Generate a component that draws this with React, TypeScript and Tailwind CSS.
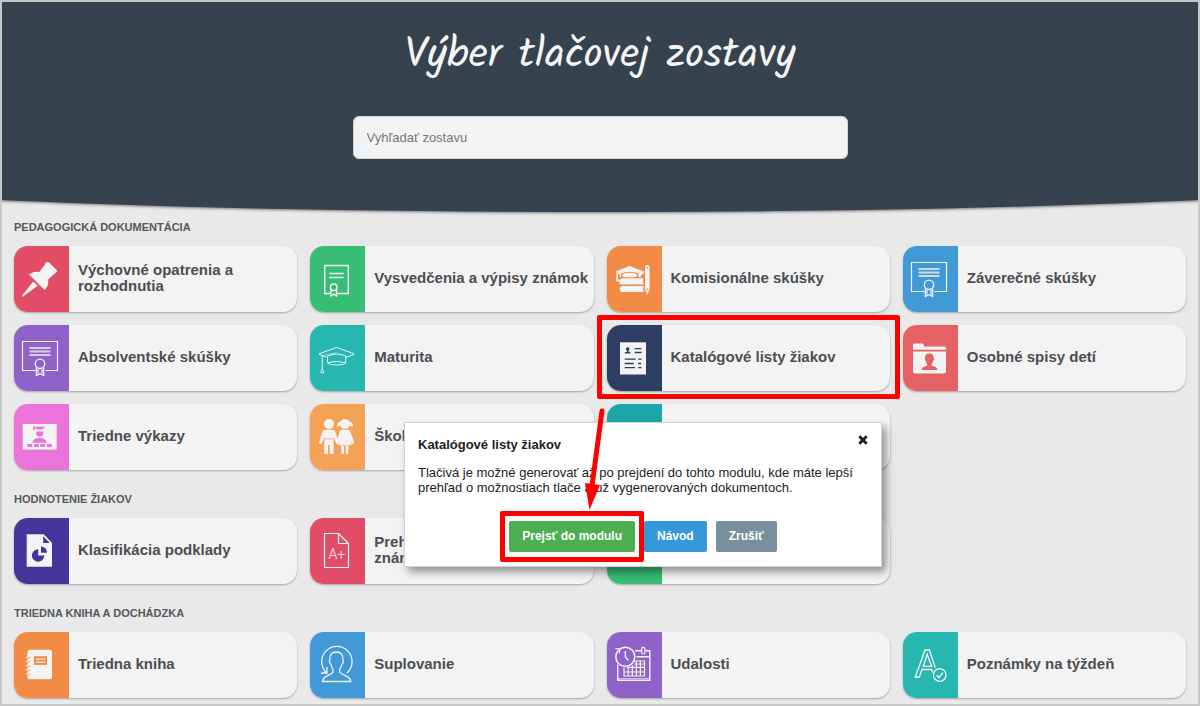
import type { ReactNode } from "react";

const ICON_INK = "#f3f3f3";

type Card = {
  label: string;
  tone: string;
  icon: ReactNode;
  highlighted?: boolean;
};

type Section = { title: string; cards: Card[] };

function Glyph({ children }: { children: ReactNode }) {
  return (
    <svg
      viewBox="0 0 55 66"
      width="55"
      height="66"
      fill="none"
      stroke={ICON_INK}
      strokeWidth="1.1"
      aria-hidden="true"
      className="block"
    >
      {children}
    </svg>
  );
}

const pin = (
  <Glyph>
    <g fill={ICON_INK} stroke="none">
      <path d="M31.800 16.600 Q33.500 15.300 35 16.500 L42.600 24 Q43.600 25.400 42.300 26.600 L39.500 28.600 L34.200 33.400 Q35.300 39 30.600 44 L15 28.500 Q19.500 24.800 25.300 26 L30.300 19.600 Z" />
      <path d="M19.200 35.600 L23.800 39.800 L9 50.600 Q7.800 51 8 49.800 Z" />
    </g>
  </Glyph>
);

const diploma = (
  <Glyph>
    <path d="M21.500 45.500 H8.500 V16.500 H43.500 V45.500 H31.500" strokeWidth="1.200" />
    <path d="M15.500 23 H36.500 M15.500 26.500 H36.500 M15.500 30 H36.500" strokeWidth="1.800" opacity="0.750" />
    <circle cx="26" cy="38.800" r="4.700" strokeWidth="1.400" />
    <path d="M22.300 42.500 V50.600 L26 48.600 L29.700 50.600 V42.500 M24 44 V48.500 M28 44 V48.500" strokeWidth="1.200" />
  </Glyph>
);

const certificate = (
  <Glyph>
    <path d="M20 47.500 H14.700 V19.500 H38.300 V47.500 H27.500" strokeWidth="1.400" />
    <path d="M19.300 27.500 H33.700 M19.300 31.500 H33.700" strokeWidth="1.400" />
    <circle cx="23.700" cy="41.300" r="3.300" strokeWidth="1.500" />
    <path d="M21 43.500 V50 L23.700 48.200 L26.500 50 V43.500" strokeWidth="1.400" />
  </Glyph>
);

const books = (
  <Glyph>
    <g fill={ICON_INK} stroke="none">
      <path d="M22.500 20 L37 25.400 V27.500 L34 29 V31 H31.500 V27.500 Q23 24 14 27.500 V31 H12.800 V28.500 L11 27.800 V31.500 L12 36 L9 35 L9.700 27 L8.600 25.500 Z" />
      <path d="M15.300 28.200 Q22.800 25.400 30 28.200 V30 Q29 31.200 27 31.200 H18 Q16 31.200 15.300 30 Z" />
      <path d="M14.500 32.300 H36.200 V33.500 Q35.200 35.300 36.500 37.300 V38.600 H14.500 Q12 38 12 35.500 Q12 33 14.500 32.300 Z" />
      <path d="M15 40 H36.700 V41.300 Q35.600 43 36.700 45 V46 H15 Q12.600 45.400 12.600 43 Q12.600 40.700 15 40 Z" />
    </g>
    <path d="M38.600 21.200 Q38.600 19.500 40.300 19.500 Q42 19.500 42 21.200 V43.500 L40.300 47.500 L38.600 43.500 Z" fill={ICON_INK} />
    <path d="M40.300 21 V22.500 M40.300 42.500 V44" stroke="#f18b45" strokeWidth="1.500" />
  </Glyph>
);

const sheet = (
  <Glyph>
    <rect x="13" y="17.300" width="26" height="32.200" fill={ICON_INK} stroke="none" />
    <g stroke="#2e3e63" strokeWidth="1.300">
      <path d="M27.700 23.700 H34.500 M27.700 27.500 H34.500 M17.700 34.200 H28.700 M31.200 34.200 H34.500 M17.700 38.500 H26.700 M31 38.500 H34 M17.700 42.700 H28 M31.200 42.700 H34.500" />
    </g>
    <path d="M19 23.500 Q19 22.200 20.700 22.200 Q22.500 22.200 22.400 23.800 Q22.300 25.500 21.500 26 V26.700 L23.700 27.500 V28.600 H17.700 V27.500 L20 26.700 V26 Q19.200 25.500 19 23.500 Z" fill="#2e3e63" stroke="none" />
  </Glyph>
);

const folder = (
  <Glyph>
    <path d="M10 24.800 V20 Q10 18.600 11.500 18.600 H19 Q20.300 18.600 20.800 20 L21.200 21.400 H41.500 Q43 21.400 43 23 V24.800 Z" fill={ICON_INK} stroke="none" />
    <path d="M10 26.500 H43 V46.600 Q43 48.400 41.300 48.400 H11.700 Q10 48.400 10 46.600 Z" fill={ICON_INK} stroke="none" />
    <path d="M26.400 28.500 C29.500 28.500 31 30.500 30.700 33.200 C31.400 33.700 30.700 35.700 30 36 C29.700 37.600 29 38.400 28.600 38.900 V40.300 C30 41.700 34.400 41.500 34.400 45 H18.600 C18.600 41.500 23 41.700 24.300 40.300 V38.900 C23.700 38.400 23 37.600 22.800 36 C22 35.700 21.400 33.700 22 33.200 C21.700 30.500 23.200 28.500 26.400 28.500 Z" fill="#e66163" stroke="none" />
  </Glyph>
);

const mortarboard = (
  <Glyph>
    <g strokeWidth="1" strokeLinejoin="round">
      <path d="M17.300 32.500 L9.300 29.500 V28.700 L26.700 22.500 L43.700 28.700 V29.500 L35.700 32.500" />
      <path d="M12.200 30.500 L26.700 27.500" opacity="0.500" />
      <path d="M17.500 31 Q26.500 27 35.700 31 V37.500 Q34.500 40 26.600 40 Q18.500 40 17.500 37.500 Z" />
      <path d="M17.500 37.800 Q26.500 35 35.700 37.800" />
      <path d="M12.200 30.500 V44" />
      <path d="M12.200 44 Q10.600 45.400 11 47.800 H13.400 Q13.800 45.400 12.200 44 Z" />
    </g>
  </Glyph>
);

const classroom = (
  <Glyph>
    <rect x="8.700" y="20" width="34" height="25.600" fill={ICON_INK} stroke="none" />
    <g fill="#ea74da" stroke="none">
      <path d="M19 22.700 H30.700 V24.300 H28.500 V25.500 H22.500 V24.300 H20.700 L20.300 26 H19 Z" />
      <path d="M22.200 27.500 H29.300 V29.500 Q28.700 32.700 25.700 32.700 Q22.800 32.700 22.200 29.500 Z" />
      <path d="M18.300 38.700 Q19.500 34 25.600 33.800 Q31.600 34 32.800 38.700 Z" />
      <path d="M13.300 40 H18.300 V43 H13.300 Z M20 40 H24.800 V43 H20 Z M26.300 40 H31.200 V43 H26.300 Z M32.800 40 H37.800 V43 H32.800 Z" />
    </g>
  </Glyph>
);

const children = (
  <Glyph>
    <g fill={ICON_INK} stroke="none">
      <circle cx="19" cy="20" r="5" />
      <path d="M15 25.700 H23 Q24.700 25.700 25.300 27.500 L29 39 L26.800 40.600 L23.600 33.500 V34.500 H14.300 V33.500 L11.300 40.600 L9 39.300 L12.400 27.500 Q13 25.700 15 25.700 Z" />
      <path d="M14.300 35.300 H23.600 V50 H19.700 V41 H18 V50 H14.200 Z" />
      <circle cx="35" cy="20" r="5" />
      <path d="M30.700 17 Q27 18.500 27 22.300 Q29.600 23.500 31.300 20 Z M39.300 17 Q43 18.500 43 22.300 Q40.500 23.500 38.700 20 Z" />
      <path d="M32 25.700 H38 Q39.500 25.700 40.200 27.500 L44.300 38.500 L42.300 40.500 L38.800 33.500 L41.800 40.700 Q35 42.400 28 40.700 L31.200 33.500 L28.500 39 L26.300 38.300 L29.800 27.500 Q30.500 25.700 32 25.700 Z" />
      <path d="M31 42 H34 V50 H31.500 Z M35.700 42 H38.700 L38.200 50 H35.700 Z" />
    </g>
  </Glyph>
);

const pieReport = (
  <Glyph>
    <path d="M12.700 16.300 H29.800 L38 25 V48.800 H12.700 Z" fill={ICON_INK} stroke="none" />
    <g fill="#46349a" stroke="none">
      <path d="M29.200 18.300 L35.800 25 H29.200 Z" />
      <path d="M24.200 31.300 A6.200 6.200 0 1 0 30.300 37.600 H24.200 Z" />
      <path d="M27 28.400 A6 6.200 0 0 1 33 34.700 H27 Z" />
    </g>
  </Glyph>
);

const grades = (
  <Glyph>
    <path d="M14.500 15.500 H28.500 L38.500 25.500 V49.500 H14.500 Z M28.500 15.500 V25.500 H38.500" strokeWidth="1.200" />
    <text x="18.500" y="41" fill={ICON_INK} stroke="none" fontFamily="Roboto, Lato, sans-serif" fontSize="14" fontWeight="300">
      A+
    </text>
  </Glyph>
);

const stand = (
  <Glyph>
    <path d="M15 19 H39 V40 H15 Z M25 40 V48.500 M29 40 V48.500" strokeWidth="1.200" />
  </Glyph>
);

const notebook = (
  <Glyph>
    <rect x="13.500" y="17.700" width="24.500" height="29.600" rx="2" fill={ICON_INK} stroke="none" />
    <path d="M12 25.500 L16.500 24 M12 29.700 L16.500 28.200 M12 34 L16.500 32.500 M12 38.200 L16.500 36.700 M12 42.500 L16.500 41" strokeWidth="1.200" />
    <path d="M12.500 26.700 L16.500 25.300 M12.500 31 L16.500 29.500 M12.500 35.200 L16.500 33.700 M12.500 39.500 L16.500 38 M12.500 43.700 L16.500 42.200" stroke="#f18b45" strokeWidth="0.800" />
    <rect x="20" y="24.200" width="13" height="8.700" fill="#f18b45" stroke="none" />
    <path d="M22 27.200 H31.300 M22 30.200 H31.300" strokeWidth="1.200" />
  </Glyph>
);

const substitute = (
  <Glyph>
    <path d="M16.800 41 A15.200 15.200 0 1 1 37 41" strokeWidth="1.300" />
    <path d="M11 41 H17 V35" strokeWidth="1.300" />
    <path
      d="M26.300 20 C31 20 33.500 23 32.800 27.500 C34 28.300 33 32 31.700 32.500 C31.300 35 30.500 36.300 29.700 37 V40 C32 44 40.700 43.500 40.700 49.500 H12.500 C12.500 43.500 21 44 23 40 V37 C22.200 36.300 21.400 35 21 32.500 C19.700 32 18.800 28.300 20 27.500 C19.300 23 21.800 20 26.300 20 Z"
      strokeWidth="1.300"
    />
  </Glyph>
);

const events = (
  <Glyph>
    <path d="M28 18.700 H34 M38.500 18.700 H42.800 V48.300 H10.700 V32.500 M29.500 24.700 H42.800" strokeWidth="1.400" />
    <rect x="34.700" y="15.300" width="3.200" height="6.700" rx="1.500" strokeWidth="1.200" />
    <circle cx="18.300" cy="24.700" r="9.500" strokeWidth="1.500" />
    <path d="M18.300 19 V25 L21.500 28.200" strokeWidth="1.300" />
    <path d="M8.300 16.500 L12.800 17 L12.300 21.500" strokeWidth="1.200" />
    <path d="M27 29 H37.500 V44 H17 V35.500 M17 40 H37.500 M20 35.300 H37.500 M21.200 35.300 V44 M25.300 33 V44 M29.400 29 V44 M33.400 29 V44 M27 32 H37.500" strokeWidth="1.200" />
    <path d="M11 46.500 H42.500" strokeWidth="1" opacity="0.600" />
  </Glyph>
);

const notes = (
  <Glyph>
    <path d="M29.500 40.500 L28.700 37.500 H19 L16.300 45 H12.300 L22 18 H26.500 L32.300 36" strokeWidth="1.300" />
    <path d="M24.200 22.300 L20.300 34.300 H28.700 Z" strokeWidth="1.300" />
    <circle cx="36.700" cy="43" r="6.300" strokeWidth="1.300" />
    <path d="M33.700 43.300 L35.800 45.600 L39.800 40.700" strokeWidth="1.400" />
  </Glyph>
);

const SECTIONS: Section[] = [
  {
    title: "Pedagogická dokumentácia",
    cards: [
      { label: "Výchovné opatrenia a rozhodnutia", tone: "bg-[#e34c67]", icon: pin },
      { label: "Vysvedčenia a výpisy známok", tone: "bg-[#37bd74]", icon: certificate },
      { label: "Komisionálne skúšky", tone: "bg-[#f18b45]", icon: books },
      { label: "Záverečné skúšky", tone: "bg-[#419ad6]", icon: diploma },
      { label: "Absolventské skúšky", tone: "bg-[#8f62ca]", icon: diploma },
      { label: "Maturita", tone: "bg-[#27b7b1]", icon: mortarboard },
      { label: "Katalógové listy žiakov", tone: "bg-[#2e3e63]", icon: sheet, highlighted: true },
      { label: "Osobné spisy detí", tone: "bg-[#e66163]", icon: folder },
      { label: "Triedne výkazy", tone: "bg-[#ea74da]", icon: classroom },
      { label: "Škola", tone: "bg-[#f4a255]", icon: children },
      { label: "", tone: "bg-[#1ca6a8]", icon: null },
    ],
  },
  {
    title: "Hodnotenie žiakov",
    cards: [
      { label: "Klasifikácia podklady", tone: "bg-[#46349a]", icon: pieReport },
      { label: "Prehľad\nznámok", tone: "bg-[#e34c67]", icon: grades },
      { label: "", tone: "bg-[#37bd74]", icon: stand },
    ],
  },
  {
    title: "Triedna kniha a dochádzka",
    cards: [
      { label: "Triedna kniha", tone: "bg-[#f18b45]", icon: notebook },
      { label: "Suplovanie", tone: "bg-[#419ad6]", icon: substitute },
      { label: "Udalosti", tone: "bg-[#8f62ca]", icon: events },
      { label: "Poznámky na týždeň", tone: "bg-[#27b7b1]", icon: notes },
    ],
  },
];

function ReportCard({ card }: { card: Card }) {
  return (
    <div className="relative">
      <button
        type="button"
        className="flex h-[66px] w-full items-center overflow-hidden rounded-[14px] bg-[#f3f3f3] text-left shadow-[0_1px_2px_rgba(0,0,0,0.3)]"
      >
        <span className={`h-full w-[55px] shrink-0 ${card.tone}`}>{card.icon}</span>
        <span className="pb-[2px] pl-[9px] text-[15px] leading-4 font-bold whitespace-pre-line text-[#4b4e52]">
          {card.label}
        </span>
      </button>
      {card.highlighted && (
        <span className="pointer-events-none absolute -inset-x-[10px] -top-[10px] -bottom-2 z-10 rounded-[2px] border-5 border-[#ff0000]" />
      )}
    </div>
  );
}

function ModuleDialog() {
  return (
    <div
      role="dialog"
      aria-labelledby="dialog-title"
      className="absolute top-[420px] left-[402px] z-20 w-[478px] border border-[#d4d4d4] bg-white px-[13px] pt-3 pb-[14px] text-[#222] shadow-[4px_5px_8px_rgba(0,0,0,0.4)]"
    >
      <div className="flex items-start justify-between">
        <h2 id="dialog-title" className="text-[13px] leading-5 font-bold">
          Katalógové listy žiakov
        </h2>
        <button type="button" aria-label="Zavrieť">
          <svg viewBox="0 0 10 10" width="10" height="10" stroke="#222" strokeWidth="3" aria-hidden="true">
            <path d="M1.300 1.300 L8.700 8.700 M8.700 1.300 L1.300 8.700" />
          </svg>
        </button>
      </div>
      <p className="mt-[10px] text-[13px] leading-[15px]">
        Tlačivá je možné generovať až po prejdení do tohto modulu, kde máte lepší prehľad o možnostiach tlače a už
        vygenerovaných dokumentoch.
      </p>
      <div className="mt-[26px] flex justify-center gap-[9px] text-xs leading-[15px] font-bold text-white">
        <div className="relative">
          <button type="button" className="rounded-[2px] bg-[#4caf50] px-[13px] py-2">
            Prejsť do modulu
          </button>
          <span className="pointer-events-none absolute -inset-x-[9px] -inset-y-[10px] z-10 rounded-[2px] border-5 border-[#ff0000]" />
        </div>
        <button type="button" className="rounded-[2px] bg-[#3498db] px-[13px] py-2">
          Návod
        </button>
        <button type="button" className="rounded-[2px] bg-[#78909c] px-[13px] py-2">
          Zrušiť
        </button>
      </div>
    </div>
  );
}

function PointerArrow() {
  return (
    <svg
      viewBox="0 0 32 106"
      width="32"
      height="106"
      aria-hidden="true"
      className="pointer-events-none absolute top-[404px] left-[576px] z-30"
    >
      <path d="M24 5 L14 80" stroke="#ff0000" strokeWidth="5" strokeLinecap="round" />
      <path d="M7 77 L22 79 L11.500 104 Z" fill="#ff0000" />
    </svg>
  );
}

export default function App() {
  return (
    <div
      lang="sk"
      className="relative min-h-screen overflow-hidden border-2 border-[#c8c8c8] bg-[#e9e9e9] font-['Liberation_Sans',Arial,sans-serif]"
    >
      <header className="relative h-[210px]">
        <div className="absolute inset-y-0 -right-1/4 -left-1/4 bg-[#36424e] shadow-[0_1px_3px_rgba(0,0,0,0.5)] [border-radius:0_0_50%_50%/0_0_47px_47px]" />
        <div className="relative flex flex-col items-center pt-[26px]">
          <h1 className="font-['Kalam','Lato',sans-serif] text-[42px] leading-[56px] text-[#f5f5f5]">
            Výber tlačovej zostavy
          </h1>
          <input
            type="search"
            aria-label="Vyhľadať zostavu"
            placeholder="Vyhľadať zostavu"
            className="mt-8 h-[43px] w-[495px] max-w-full rounded-md border border-[#d0d4d8] bg-[#f3f3f3] px-[13px] text-[13px] text-[#444] placeholder:text-[#777]"
          />
        </div>
      </header>

      <main className="px-3 pb-[6px]">
        {SECTIONS.map((section) => (
          <section key={section.title} className="pb-[14px] last:pb-0">
            <h2 className="pt-2 pb-3 text-[11px] leading-[14px] font-bold text-[#54585c] uppercase">{section.title}</h2>
            <div className="grid grid-cols-4 gap-[13px]">
              {section.cards.map((card) => (
                <ReportCard key={card.tone + card.label} card={card} />
              ))}
            </div>
          </section>
        ))}
      </main>

      <ModuleDialog />
      <PointerArrow />
    </div>
  );
}
